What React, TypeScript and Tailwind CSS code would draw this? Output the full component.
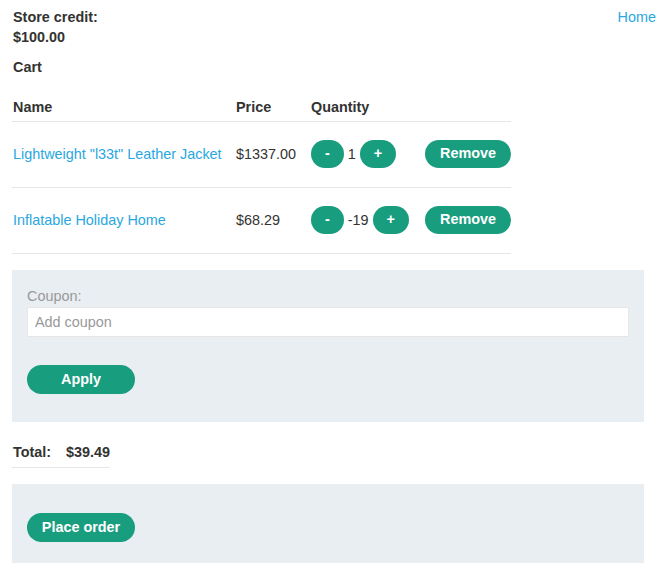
import React from 'react';

const items = [
  { name: 'Lightweight "l33t" Leather Jacket', price: '$1337.00', qty: 1 },
  { name: 'Inflatable Holiday Home', price: '$68.29', qty: -19 },
];

const GreenButton: React.FC<{ children: React.ReactNode; className?: string }> = ({ children, className = '' }) => (
  <button className={`h-[28px] rounded-full bg-[#189d7e] text-white font-bold leading-none ${className}`}>
    {children}
  </button>
);

const App: React.FC = () => {
  return (
    <div className="min-h-[576px] bg-white text-[#333332] text-[14.4px] leading-[20px] font-['Liberation_Sans',Arial,sans-serif]">
      <header className="flex justify-between pl-[13px] pr-[4px] pt-[7px]">
        <div className="font-bold">
          <div>Store credit:</div>
          <div>$100.00</div>
        </div>
        <a href="#" className="text-[#29a7e1]">Home</a>
      </header>

      <div className="px-[12px]">
        <h2 className="mt-[10px] pl-px font-bold">Cart</h2>

        <table className="mt-[20px] w-[499px] border-collapse text-left">
          <thead>
            <tr className="border-b border-[#e6e6e6]">
              <th className="w-[224px] pl-px pb-[4px] font-bold">Name</th>
              <th className="w-[75px] pb-[4px] font-bold">Price</th>
              <th className="w-[114px] pb-[4px] font-bold">Quantity</th>
              <th className="pb-[4px]"></th>
            </tr>
          </thead>
          <tbody>
            {items.map((item) => (
              <tr key={item.name} className="h-[66px] border-b border-[#e6e6e6]">
                <td className="pl-px pb-[2px]">
                  <a href="#" className="text-[#29a7e1]">{item.name}</a>
                </td>
                <td className="pb-[2px]">{item.price}</td>
                <td className="pb-[2px]">
                  <div className="flex items-center gap-[4px]">
                    <GreenButton className="px-[14px]">-</GreenButton>
                    <span>{item.qty}</span>
                    <GreenButton className="px-[14px]">+</GreenButton>
                  </div>
                </td>
                <td className="pb-[2px] text-right">
                  <GreenButton className="w-[86px]">Remove</GreenButton>
                </td>
              </tr>
            ))}
          </tbody>
        </table>

        <div className="mt-[16px] w-[632px] bg-[#e8eef1] px-[15px] pt-[16px] pb-[28px]">
          <label className="block text-[#999999]">Coupon:</label>
          <input
            placeholder="Add coupon"
            className="mt-[1px] block h-[30px] w-full border border-[#e6e6e6] bg-white px-[7px] text-[14.4px] outline-none placeholder:text-[#999999]"
          />
          <GreenButton className="mt-[28px] h-[29px] w-[108px]">Apply</GreenButton>
        </div>

        <div className="mt-[20px] inline-block border-b border-[#e6e6e6] pb-[5px] pl-px font-bold">
          <span>Total:</span>
          <span className="ml-[15px]">$39.49</span>
        </div>

        <div className="mt-[16px] w-[632px] bg-[#e8eef1] px-[15px] pt-[29px] pb-[21px]">
          <GreenButton className="h-[29px] w-[108px]">Place order</GreenButton>
        </div>
      </div>
    </div>
  );
};

export default App;
